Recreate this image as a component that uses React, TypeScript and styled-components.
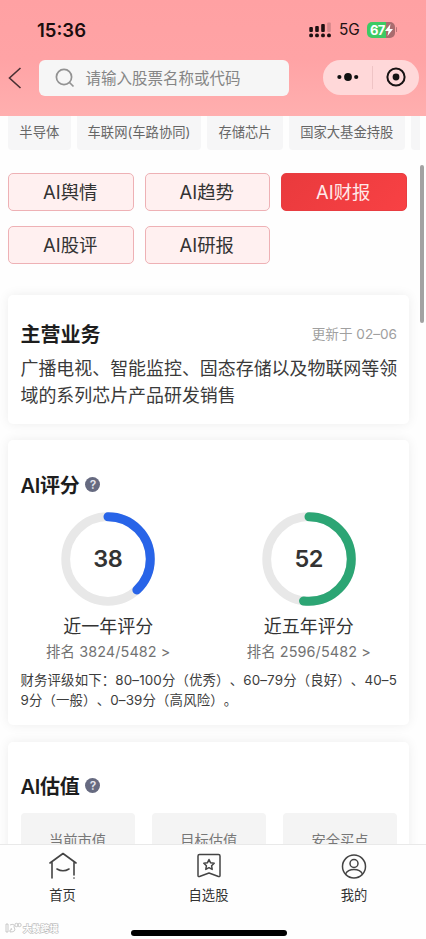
import React from "react";
import styled, { createGlobalStyle } from "styled-components";

const Global = createGlobalStyle`
  *{box-sizing:border-box}
  html,body{margin:0;padding:0;background:#fff}
  body{font-family:Inter,"Noto Sans CJK SC",sans-serif;color:#333;overflow:hidden;text-spacing-trim:space-all}
`;

const Screen = styled.div`
  width: 426px;
  height: 939px;
  display: flex;
  flex-direction: column;
  overflow: hidden;
  background: #fefefe;
`;
const Header = styled.header`
  height: 116px;
  flex: none;
  background: linear-gradient(#ffa1a3, #ffa3a5 50%, #ffafaf);
`;
const StatusBar = styled.div`
  height: 59px;
  display: flex;
  align-items: center;
  justify-content: space-between;
  padding: 0 29px 0 37px;
`;
const Clock = styled.span`
  font-size: 18.5px;
  font-weight: 600;
  color: #1b0d0e;
`;
const StatusIcons = styled.div`
  display: flex;
  align-items: center;
`;
const Network = styled.span`
  width: 21px;
  margin: 0 7px 0 8px;
  font-size: 15.4px;
  font-weight: 400;
  letter-spacing: -0.2px;
  white-space: nowrap;
  color: #211112;
`;
const Battery = styled.div`
  display: flex;
  align-items: center;
  width: 28px;
  height: 16px;
  padding-left: 3px;
  border-radius: 5px;
  background: linear-gradient(90deg, #3dca63 67%, #a96c6e 67%);
  color: #fff;
  font-size: 13px;
  font-weight: 700;
  letter-spacing: -0.6px;
  svg {
    flex: none;
  }
`;
const BatteryTip = styled.i`
  width: 1px;
  height: 5px;
  margin-left: 1px;
  border-radius: 1px;
  background: #b97477;
`;
const SearchRow = styled.div`
  display: flex;
  align-items: center;
  height: 37px;
  padding: 0 7px 0 8px;
`;
const BackIcon = styled.svg`
  margin-right: 17px;
  flex: none;
`;
const SearchBox = styled.div`
  display: flex;
  align-items: center;
  gap: 10.5px;
  width: 250px;
  height: 36px;
  padding: 0 0 1px 16px;
  border-radius: 6px;
  background: #f6f6f6;
  color: #858585;
  font-size: 15.5px;
  svg {
    margin-top: 1px;
  }
`;
const Capsule = styled.div`
  width: 96px;
  height: 35px;
  margin-left: auto;
  display: grid;
  grid-template-columns: 49px 1px 1fr;
  align-items: center;
  justify-items: center;
  border-radius: 18px;
  background: #ffd8d9;
  svg {
    margin-top: -1px;
  }
`;
const CapsuleLine = styled.i`
  width: 1px;
  height: 23px;
  background: #efc4c5;
`;
const Body = styled.main`
  flex: 1;
  min-height: 0;
  display: flex;
  overflow: hidden;
`;
const Content = styled.div`
  flex: none;
  width: 420px;
  overflow: hidden;
`;
const ScrollBar = styled.i`
  width: 4px;
  height: 158px;
  margin-top: 49px;
  border-radius: 2px;
  background: #a2a2a2;
`;
const Chips = styled.div`
  display: flex;
  gap: 6px;
  padding-left: 8px;
  overflow: hidden;
`;
const Chip = styled.span<{ $w: number }>`
  flex: none;
  width: ${(p) => p.$w}px;
  height: 34px;
  line-height: 32px;
  text-align: center;
  border-radius: 0 0 4px 4px;
  background: #f6f6f7;
  color: #666;
  font-size: 13.3px;
  white-space: nowrap;
`;
const Tabs = styled.div`
  display: grid;
  grid-template-columns: repeat(3, 125.5px);
  grid-auto-rows: 38px;
  gap: 15px 11px;
  padding: 23px 8px 0;
`;
const Tab = styled.button<{ $active?: boolean }>`
  border: 1px solid ${(p) => (p.$active ? "#e83d41" : "#eeb1b5")};
  border-radius: 5px;
  padding: 0 1px 2px 0;
  background: ${(p) => (p.$active ? "linear-gradient(135deg,#e93a3d,#f84144)" : "#fff0f0")};
  color: ${(p) => (p.$active ? "#ffe9e9" : "#333")};
  font: 18.4px Inter, "Noto Sans CJK SC", sans-serif;
`;
const Card = styled.section<{ $gap: number; $h: number; $top: number }>`
  width: 401px;
  height: ${(p) => p.$h}px;
  margin: ${(p) => p.$gap}px 0 0 8px;
  padding: ${(p) => p.$top}px 12px 0 12.5px;
  border-radius: 5px;
  background: #fff;
  box-shadow: 0 0 12px rgba(0, 0, 0, 0.07);
`;
const CardHead = styled.div`
  display: flex;
  align-items: center;
  height: 28px;
`;
const Title = styled.h2<{ $tight?: boolean }>`
  margin: 0;
  font-size: 20px;
  font-weight: 600;
  letter-spacing: ${(p) => (p.$tight ? -0.3 : 0)}px;
  color: #1d1d1d;
  white-space: nowrap;
`;
const Updated = styled.span`
  margin-left: auto;
  font-size: 13.6px;
  color: #a0a0a0;
`;
const Business = styled.p`
  margin: 8px 0 0;
  font-size: 17.95px;
  line-height: 27px;
  color: #3a3a3a;
  white-space: nowrap;
`;
const Help = styled.span`
  display: grid;
  place-items: center;
  width: 15px;
  height: 15px;
  margin-left: 6px;
  border-radius: 50%;
  background: #666a80;
  color: #e4e5ec;
  font-size: 12px;
  font-weight: 600;
  line-height: 15px;
`;
const Scores = styled.div`
  display: grid;
  grid-template-columns: 1fr 1fr;
  margin: 14px -12px 0 -12.5px;
`;
const Score = styled.div`
  display: flex;
  flex-direction: column;
  align-items: center;
`;
const GaugeValue = styled.text`
  font: 600 23.5px Inter, sans-serif;
  letter-spacing: -0.6px;
  fill: #333;
`;
const ScoreName = styled.div`
  height: 27px;
  margin-top: 7px;
  line-height: 28px;
  font-size: 18px;
  color: #333;
`;
const Rank = styled.div`
  height: 24px;
  line-height: 24px;
  font-size: 14.4px;
  letter-spacing: 0.1px;
  color: #737373;
`;
const Legend = styled.p`
  margin: 6px 0 0;
  font-size: 13.4px;
  letter-spacing: 0.15px;
  line-height: 20px;
  color: #3c3c3c;
  white-space: nowrap;
`;
const Values = styled.div`
  display: grid;
  grid-template-columns: repeat(3, 114px);
  justify-content: space-between;
  margin-top: 14px;
`;
const Value = styled.div`
  height: 80px;
  padding-top: 16px;
  text-align: center;
  border-radius: 4px;
  background: #f4f4f4;
  color: #777;
  font-size: 14.3px;
  line-height: 24px;
`;
const BottomNav = styled.nav`
  flex: none;
  height: 95px;
  border-top: 1px solid #e9e9e9;
  background: #fefefe;
`;
const NavItems = styled.div`
  display: grid;
  grid-template-columns: 125px 167px 124px;
  height: 63px;
`;
const NavItem = styled.div`
  display: flex;
  flex-direction: column;
  align-items: center;
  padding-top: 7px;
  font-size: 13.3px;
  line-height: 20px;
  color: #333;
  svg {
    display: block;
    margin-bottom: 5px;
  }
`;
const Footer = styled.div`
  display: grid;
  grid-template-columns: 131px 156px;
`;
const HomeIndicator = styled.i`
  height: 6px;
  margin-top: 22px;
  border-radius: 3px;
  background: #000;
`;
const Watermark = styled.span`
  display: flex;
  align-items: center;
  gap: 1px;
  height: 18px;
  padding-left: 5px;
  margin-top: 11px;
  font-size: 8.8px;
  font-weight: 700;
  color: #fff;
  -webkit-text-stroke: 1.2px #bdbdbd;
  paint-order: stroke fill;
  white-space: nowrap;
`;

function Gauge({ value, color }: { value: number; color: string }) {
  const r = 42.3;
  const c = 2 * Math.PI * r;
  return (
    <svg width="94" height="94" viewBox="0 0 94 94">
      <circle cx="47" cy="47" r={r} fill="none" stroke="#e8e8e8" strokeWidth="8.8" />
      <circle
        cx="47" cy="47" r={r} fill="none" stroke={color} strokeWidth="9" strokeLinecap="round"
        strokeDasharray={`${(c * value) / 100} ${c}`} transform="rotate(-90 47 47)"
      />
      <GaugeValue x="46.7" y="55.3" textAnchor="middle">{value}</GaugeValue>
    </svg>
  );
}

const chips: [string, number][] = [["半导体", 62.6], ["车联网(车路协同)", 124.7], ["存储芯片", 75.5], ["国家大基金持股", 116], ["", 60]];
const tabs = ["AI舆情", "AI趋势", "AI财报", "AI股评", "AI研报"];
const scores = [
  { value: 38, color: "#2864e8", name: "近一年评分", rank: "3824/5482" },
  { value: 52, color: "#2ca574", name: "近五年评分", rank: "2596/5482" },
];

export default function App() {
  return (
    <Screen>
      <Global />
      <Header>
        <StatusBar>
          <Clock>15:36</Clock>
          <StatusIcons>
            <svg width="22" height="16" viewBox="0 0 22 16" fill="#1d1011">
              <rect x="0.3" y="5" width="3.6" height="5" rx="1" />
              <rect x="6.2" y="4" width="3.6" height="6" rx="1" />
              <rect x="12.2" y="2" width="3.6" height="8" rx="1" />
              <rect x="18.2" y="0.5" width="3.6" height="9.5" rx="1" fill="#d38689" />
              {[0.2, 6.1, 12.1, 18.1].map((x) => <rect key={x} x={x} y="11.4" width="3.8" height="3.8" rx="1.5" />)}
            </svg>
            <Network>5G</Network>
            <Battery>
              67
              <svg width="8" height="12" viewBox="0 0 8 12" fill="#fff"><path d="M5.5 0 0 7h3.5L2.5 12 8 5H4.7z" /></svg>
            </Battery>
            <BatteryTip />
          </StatusIcons>
        </StatusBar>
        <SearchRow>
          <BackIcon width="14" height="22" viewBox="0 0 14 22" fill="none" stroke="#493033" strokeWidth="1.6"><path d="M12.5 1 1.5 11l11 10" /></BackIcon>
          <SearchBox>
            <svg width="20" height="20" viewBox="0 0 20 20" fill="none" stroke="#929292" strokeWidth="1.7"><circle cx="9" cy="9" r="7.6" /><path d="m14.5 14.5 4 4" /></svg>
            请输入股票名称或代码
          </SearchBox>
          <Capsule>
            <svg width="22" height="8" viewBox="0 0 22 8" fill="#111"><circle cx="2.4" cy="4" r="2.1" /><circle cx="11" cy="4" r="3.9" /><circle cx="19.2" cy="4" r="2.1" /></svg>
            <CapsuleLine />
            <svg width="20" height="20" viewBox="0 0 20 20"><circle cx="10" cy="10" r="8.6" fill="none" stroke="#171213" strokeWidth="2" /><circle cx="10" cy="10" r="3.4" fill="#171213" /></svg>
          </Capsule>
        </SearchRow>
      </Header>
      <Body>
        <Content>
          <Chips>{chips.map(([t, w]) => <Chip key={w} $w={w}>{t}</Chip>)}</Chips>
          <Tabs>{tabs.map((t) => <Tab key={t} $active={t === "AI财报"}>{t}</Tab>)}</Tabs>
          <Card $gap={31} $h={129} $top={24}>
            <CardHead><Title>主营业务</Title><Updated>更新于 02–06</Updated></CardHead>
            <Business>广播电视、智能监控、固态存储以及物联网等领<br />域的系列芯片产品研发销售</Business>
          </Card>
          <Card $gap={16} $h={285} $top={30}>
            <CardHead><Title $tight>AI评分</Title><Help>?</Help></CardHead>
            <Scores>
              {scores.map((s) => (
                <Score key={s.value}>
                  <Gauge value={s.value} color={s.color} />
                  <ScoreName>{s.name}</ScoreName>
                  <Rank>排名 {s.rank} &gt;</Rank>
                </Score>
              ))}
            </Scores>
            <Legend>
              财务评级如下：80–100分（优秀）、60–79分（良好）、40–5<br />
              9分（一般）、0–39分（高风险）。
            </Legend>
          </Card>
          <Card $gap={17} $h={160} $top={29}>
            <CardHead><Title $tight>AI估值</Title><Help>?</Help></CardHead>
            <Values><Value>当前市值</Value><Value>目标估值</Value><Value>安全买点</Value></Values>
          </Card>
        </Content>
        <ScrollBar />
      </Body>
      <BottomNav>
        <NavItems>
          <NavItem>
            <svg width="28" height="28" viewBox="0 0 28 28" fill="none" stroke="#444" strokeWidth="1.6" strokeLinecap="round" strokeLinejoin="round"><path d="M1 11 14 1.5 27 11M3 10v16M25 10v13M25 26v.1M8 17q6 3.5 12 0" /></svg>
            首页
          </NavItem>
          <NavItem>
            <svg width="28" height="28" viewBox="0 0 28 28" fill="none" stroke="#444" strokeWidth="1.5" strokeLinejoin="round"><path d="M4.5 2.5h19Q25 2.5 25 4v19.500q0 1.500-1.500 1L14 21l-9.500 3.500Q3 25 3 23.500V4q0-1.500 1.500-1.500z" /><path d="m14 7.500 1.600 3.300 3.600.5-2.600 2.500.6 3.600-3.200-1.700-3.200 1.700.6-3.600-2.600-2.500 3.600-.5z" /></svg>
            自选股
          </NavItem>
          <NavItem>
            <svg width="28" height="28" viewBox="0 0 28 28" fill="none" stroke="#444" strokeWidth="1.5"><circle cx="14" cy="14.500" r="11.500" /><circle cx="14" cy="11.500" r="4" /><path d="M5.500 22c3-6 14-6 17 0" /></svg>
            我的
          </NavItem>
        </NavItems>
        <Footer>
          <Watermark>
            <svg width="17" height="12" viewBox="0 0 17 12" fill="none" stroke="#bdbdbd" strokeWidth=".8"><path d="M1 2h2v8H1zM5 3q5-2 4 2 3 5-4 5V8q3 0 1-2" /><circle cx="11.500" cy="3" r="1.700" /><circle cx="14.500" cy="3" r="1.700" /></svg>
            大数跨境
          </Watermark>
          <HomeIndicator />
        </Footer>
      </BottomNav>
    </Screen>
  );
}
